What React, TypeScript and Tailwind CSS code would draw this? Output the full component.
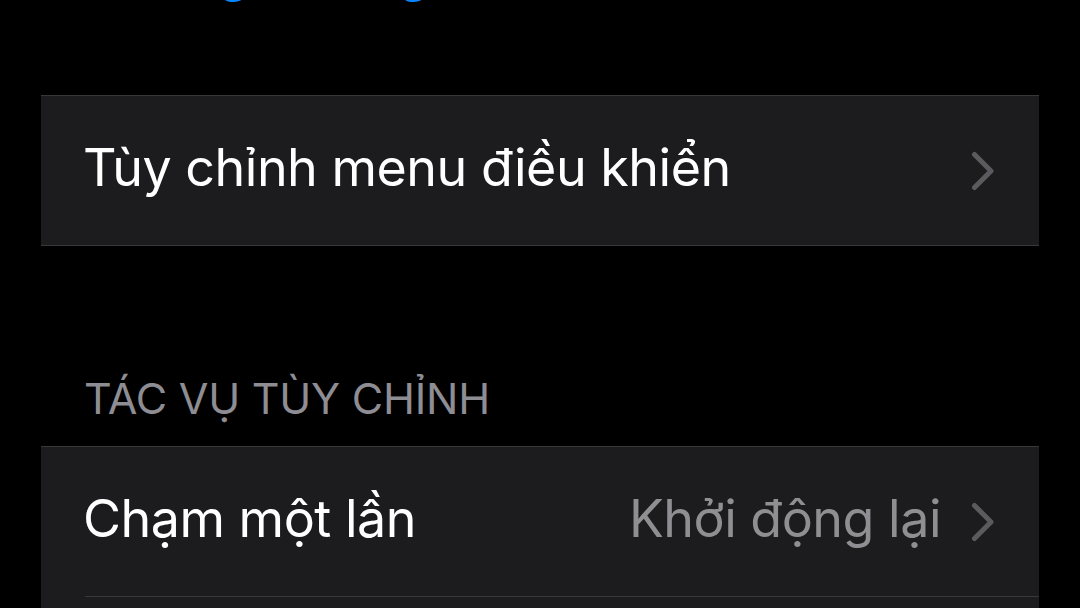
import React from "react";

function Chevron() {
  return (
    <svg width="24" height="40" viewBox="0 0 24 40" className="shrink-0">
      <path d="M3.5 3.5 L20 20 L3.5 36.5" fill="none" stroke="#5a5a5f" strokeWidth="5" strokeLinecap="round" strokeLinejoin="round" />
    </svg>
  );
}

export default function App() {
  return (
    <div
      className="w-[1080px] h-[608px] bg-black overflow-hidden flex flex-col"
      style={{ fontFamily: 'Inter, "Noto Sans", "Liberation Sans", sans-serif' }}
    >
      <div className="h-[95px] shrink-0 overflow-hidden">
        <div className="flex mt-[-53px] text-[52px] leading-[52px] text-[#0a84ff]">
          <span className="ml-[218px]">g</span>
          <span className="ml-[148px]">g</span>
        </div>
      </div>

      <div className="mx-[41px] shrink-0 h-[151px] bg-[#1c1c1e] border-y border-[#38383a] flex items-center pl-[44px] pr-[44px]">
        <span className="flex-1 text-white text-[52px] leading-[60px] tracking-[-0.5px] pb-[6px] ml-[-2px]">Tùy chỉnh menu điều khiển</span>
        <Chevron />
      </div>

      <div className="h-[200px] shrink-0 flex items-end pb-[23px] pl-[84px]">
        <span className="text-[#8d8d93] text-[43px] leading-[50px] tracking-[-0.25px]">TÁC VỤ TÙY CHỈNH</span>
      </div>

      <div className="mx-[41px] flex-1 bg-[#1c1c1e] border-t border-[#38383a] flex flex-col">
        <div className="h-[150px] shrink-0 flex items-center ml-[44px] pr-[44px] border-b border-[#38383a]">
          <span className="flex-1 text-white text-[52px] leading-[60px] tracking-[-0.5px] pb-[6px] ml-[-2px]">Chạm một lần</span>
          <span className="text-[#8e8e93] text-[52px] leading-[60px] tracking-[-0.5px] pb-[6px] mr-[30px]">Khởi động lại</span>
          <Chevron />
        </div>
      </div>
    </div>
  );
}
